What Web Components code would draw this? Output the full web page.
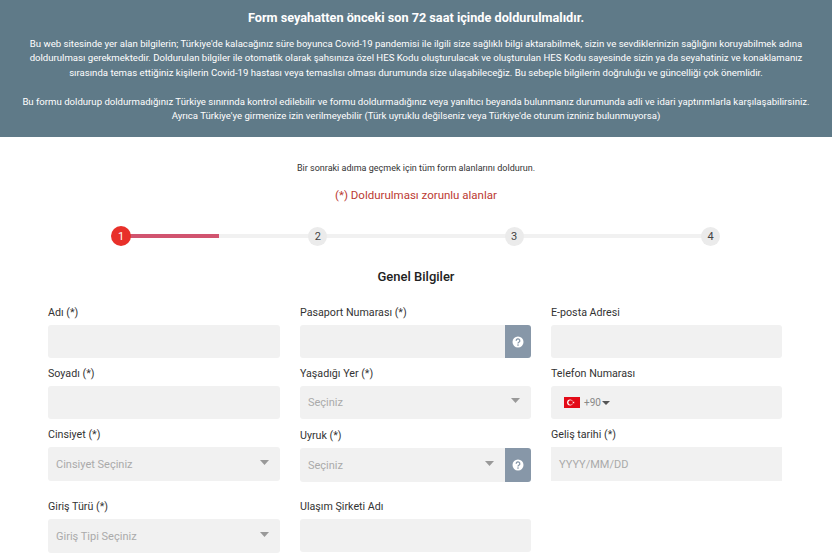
<!DOCTYPE html>
<html lang="tr">
<head>
<meta charset="utf-8">
<title>Form</title>
<style>
  html, body { margin: 0; height: 560px; overflow: hidden; background: #fff; }
  body { font-family: Roboto, "Liberation Sans", sans-serif; color: #222; }
</style>
</head>
<body>
<info-banner>
  <span slot="title">Form seyahatten önceki son 72 saat içinde doldurulmalıdır.</span>
  <p>Bu web sitesinde yer alan bilgilerin; Türkiye'de kalacağınız süre boyunca Covid-19 pandemisi ile ilgili size sağlıklı bilgi aktarabilmek, sizin ve sevdiklerinizin sağlığını koruyabilmek adına<br>doldurulması gerekmektedir. Doldurulan bilgiler ile otomatik olarak şahsınıza özel HES Kodu oluşturulacak ve oluşturulan HES Kodu sayesinde sizin ya da seyahatiniz ve konaklamanız<br>sırasında temas ettiğiniz kişilerin Covid-19 hastası veya temaslısı olması durumunda size ulaşabileceğiz. Bu sebeple bilgilerin doğruluğu ve güncelliği çok önemlidir.</p>
  <p>Bu formu doldurup doldurmadığınız Türkiye sınırında kontrol edilebilir ve formu doldurmadığınız veya yanıltıcı beyanda bulunmanız durumunda adli ve idari yaptırımlarla karşılaşabilirsiniz.<br>Ayrıca Türkiye'ye girmenize izin verilmeyebilir (Türk uyruklu değilseniz veya Türkiye'de oturum izniniz bulunmuyorsa)</p>
</info-banner>
<form-notice>
  <span slot="hint">Bir sonraki adıma geçmek için tüm form alanlarını doldurun.</span>
  <span slot="required">(*) Doldurulması zorunlu alanlar</span>
</form-notice>
<step-bar></step-bar>
<section-title>Genel Bilgiler</section-title>
<form-grid>
  <form-column>
    <form-field label="Adı (*)"></form-field>
    <form-field label="Soyadı (*)"></form-field>
    <form-field label="Cinsiyet (*)" kind="select" placeholder="Cinsiyet Seçiniz" tall></form-field>
    <form-field label="Giriş Türü (*)" kind="select" placeholder="Giriş Tipi Seçiniz" tall gap></form-field>
  </form-column>
  <form-column>
    <form-field label="Pasaport Numarası (*)" help></form-field>
    <form-field label="Yaşadığı Yer (*)" kind="select" placeholder="Seçiniz"></form-field>
    <form-field label="Uyruk (*)" kind="select" placeholder="Seçiniz" help tall shift></form-field>
    <form-field label="Ulaşım Şirketi Adı" gap-small></form-field>
  </form-column>
  <form-column>
    <form-field label="E-posta Adresi"></form-field>
    <form-field label="Telefon Numarası" kind="phone"></form-field>
    <form-field label="Geliş tarihi (*)" placeholder="YYYY/MM/DD" tall square></form-field>
  </form-column>
</form-grid>

<script>
class InfoBanner extends HTMLElement {
  constructor() {
    super();
    this.attachShadow({ mode: "open" });
    this.shadowRoot.innerHTML = `
      <style>
        :host {
          display: block;
          height: 137px;
          box-sizing: border-box;
          padding-top: 10px;
          background: #5f7a88;
          color: #fff;
          text-align: center;
          font-size: 9.6px;
          line-height: 14.4px;
        }
        .title {
          font-size: 12.7px;
          font-weight: 700;
          line-height: 16px;
          margin-bottom: 11px;
        }
        ::slotted(p) { margin: 0 0 14.4px; }
      </style>
      <div class="title"><slot name="title"></slot></div>
      <slot></slot>
    `;
  }
}

class FormNotice extends HTMLElement {
  constructor() {
    super();
    this.attachShadow({ mode: "open" });
    this.shadowRoot.innerHTML = `
      <style>
        :host {
          display: flex;
          flex-direction: column;
          align-items: center;
          padding-top: 24px;
        }
        .hint { font-size: 9px; line-height: 14px; color: #333; }
        .required { font-size: 11.5px; line-height: 16px; margin-top: 12px; color: #bb3a32; }
      </style>
      <div class="hint"><slot name="hint"></slot></div>
      <div class="required"><slot name="required"></slot></div>
    `;
  }
}

class StepBar extends HTMLElement {
  constructor() {
    super();
    this.attachShadow({ mode: "open" });
    this.shadowRoot.innerHTML = `
      <style>
        :host {
          display: block;
          position: relative;
          margin: 23px 112px 0 111px;
          height: 20px;
        }
        .track, .fill {
          position: absolute;
          top: 8px;
          height: 4px;
          left: 10px;
        }
        .track { right: 10px; background: #f1f1f1; }
        .fill { width: 98px; background: #d1546f; }
        .steps {
          position: relative;
          display: flex;
          justify-content: space-between;
          align-items: center;
          height: 20px;
        }
        .step {
          width: 19px;
          height: 19px;
          border-radius: 50%;
          background: #ebebeb;
          color: #444;
          font-size: 11px;
          display: flex;
          align-items: center;
          justify-content: center;
        }
        .step.on { width: 20px; height: 20px; background: #e8302a; color: #fff; }
      </style>
      <div class="track"></div>
      <div class="fill"></div>
      <div class="steps">
        <div class="step on">1</div>
        <div class="step">2</div>
        <div class="step">3</div>
        <div class="step">4</div>
      </div>
    `;
  }
}

class SectionTitle extends HTMLElement {
  constructor() {
    super();
    this.attachShadow({ mode: "open" });
    this.shadowRoot.innerHTML = `
      <style>
        :host {
          display: block;
          margin-top: 23px;
          text-align: center;
          font-size: 13px;
          font-weight: 500;
          line-height: 16px;
          color: #222;
        }
      </style>
      <slot></slot>
    `;
  }
}

class FormGrid extends HTMLElement {
  constructor() {
    super();
    this.attachShadow({ mode: "open" });
    this.shadowRoot.innerHTML = `
      <style>
        :host {
          display: grid;
          grid-template-columns: 232px 231px 231px;
          column-gap: 20px;
          padding: 21px 0 0 48px;
        }
      </style>
      <slot></slot>
    `;
  }
}

class FormColumn extends HTMLElement {
  constructor() {
    super();
    this.attachShadow({ mode: "open" });
    this.shadowRoot.innerHTML = `
      <style>
        :host { display: flex; flex-direction: column; }
      </style>
      <slot></slot>
    `;
  }
}

const CARET = `<svg class="caret" width="9" height="5" viewBox="0 0 9 5"><path d="M0 0h9L4.500 5z" fill="#999"/></svg>`;
const HELP = `<div class="help"><svg width="12" height="12" viewBox="0 0 12 12"><circle cx="6" cy="6" r="5.500" fill="#fff"/><path d="M4.200 4.700a1.800 1.800 0 1 1 2.700 1.500c-.6.4-.9.6-.9 1.200" fill="none" stroke="#8797a8" stroke-width="1.300"/><circle cx="6" cy="9.100" r=".8" fill="#8797a8"/></svg></div>`;
const FLAG = `<svg class="flag" width="16" height="11" viewBox="0 0 16 11"><rect width="16" height="11" fill="#e30a17"/><circle cx="6" cy="5.500" r="2.900" fill="#fff"/><circle cx="6.700" cy="5.500" r="2.300" fill="#e30a17"/><path d="M8.300 5.500l2.300-.8-1.400 2v-2.400l1.400 2z" fill="#fff"/></svg>`;

class FormField extends HTMLElement {
  constructor() {
    super();
    this.attachShadow({ mode: "open" });
  }

  connectedCallback() {
    const kind = this.getAttribute("kind") || "text";
    const placeholder = this.getAttribute("placeholder") || "";
    let inner = `<span class="ph">${placeholder}</span>`;
    if (kind === "select") inner += CARET;
    if (kind === "phone") {
      inner = `${FLAG}<span class="code">+90</span><svg width="8" height="4" viewBox="0 0 8 4"><path d="M0 0h8L4 4z" fill="#555"/></svg>`;
    }
    const help = this.hasAttribute("help") ? HELP : "";
    this.shadowRoot.innerHTML = `
      <style>
        :host { display: block; }
        :host([gap]) { margin-top: 10px; }
        :host([gap-small]) { margin-top: 9px; }
        :host([shift]) { margin-top: 1px; }
        label {
          display: block;
          height: 13px;
          font-size: 10.7px;
          line-height: 13px;
          color: #333;
          margin-bottom: 6px;
        }
        .row { display: flex; height: 33px; margin-bottom: 9px; }
        :host([tall]) .row { height: 34px; }
        .box {
          flex: 1;
          min-width: 0;
          display: flex;
          align-items: center;
          box-sizing: border-box;
          padding: 0 8px;
          background: #f1f1f1;
          border-radius: 3px;
          font-size: 11px;
          color: #aaa;
        }
        :host([square]) .box { border-radius: 0; }
        .ph { flex: 1; }
        .caret { margin-right: 3px; margin-top: -4px; }
        .flag { margin: 0 4px 0 5px; }
        .code { font-size: 10px; color: #888; margin-right: 1px; }
        .help {
          width: 26px;
          flex: none;
          display: flex;
          align-items: center;
          justify-content: center;
          background: #8797a8;
          border-radius: 0 3px 3px 0;
        }
        :host([help]) .box { border-radius: 3px 0 0 3px; }
      </style>
      <label>${this.getAttribute("label")}</label>
      <div class="row"><div class="box">${inner}</div>${help}</div>
    `;
  }
}

customElements.define("info-banner", InfoBanner);
customElements.define("form-notice", FormNotice);
customElements.define("step-bar", StepBar);
customElements.define("section-title", SectionTitle);
customElements.define("form-grid", FormGrid);
customElements.define("form-column", FormColumn);
customElements.define("form-field", FormField);
</script>
</body>
</html>
